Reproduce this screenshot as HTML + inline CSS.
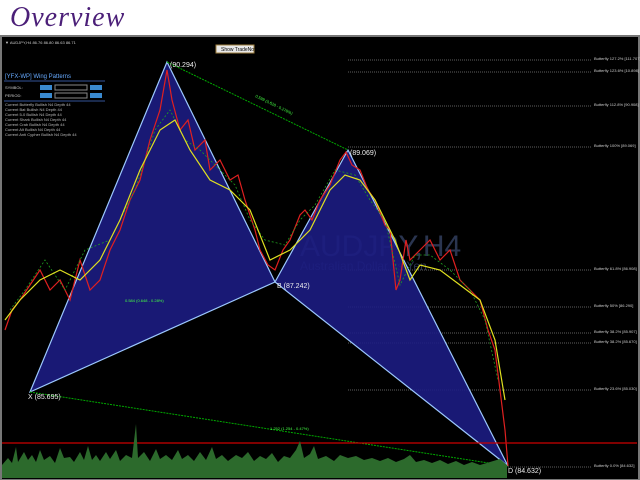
<html><head><style>body{margin:0;width:640px;height:480px;overflow:hidden;background:#fff}
.t{position:absolute;left:10px;top:2px;font:italic 28px "Liberation Serif",serif;color:#4b1f78;letter-spacing:1px}</style></head><body>
<div class="t">Overview</div>
<svg style="position:absolute;left:0;top:0" width="640" height="480" font-family="Liberation Sans,sans-serif">
<rect x="1" y="36" width="638" height="444" fill="#000" stroke="#777" stroke-width="2"/>
<text x="5" y="44" fill="#ccc" font-size="4">▼ AUDJPY,H4 86.76 86.80 86.63 86.71</text>
<rect x="216" y="45" width="38" height="8" fill="#e8e8e8" stroke="#a08040"/>
<text x="221" y="51" font-size="5" fill="#000">Show TradeNote</text>
<g stroke="#bbb" stroke-dasharray="1,1" stroke-width="0.6">
<line x1="348" y1="60" x2="592" y2="60"/><line x1="348" y1="72" x2="592" y2="72"/><line x1="348" y1="106" x2="592" y2="106"/><line x1="348" y1="147" x2="592" y2="147"/><line x1="348" y1="270" x2="592" y2="270"/><line x1="348" y1="307" x2="592" y2="307"/><line x1="348" y1="333" x2="592" y2="333"/><line x1="348" y1="343" x2="592" y2="343"/><line x1="348" y1="390" x2="592" y2="390"/><line x1="348" y1="467" x2="592" y2="467"/></g>
<g fill="#ccc" font-size="4"><text x="594" y="60">Butterfly 127.2% [111.707]</text><text x="594" y="72">Butterfly 123.6% [10.898]</text><text x="594" y="106">Butterfly 112.8% [90.908]</text><text x="594" y="147">Butterfly 100% [89.069]</text><text x="594" y="270">Butterfly 61.8% [86.908]</text><text x="594" y="307">Butterfly 50% [86.290]</text><text x="594" y="333">Butterfly 38.2% [85.907]</text><text x="594" y="343">Butterfly 38.2% [85.670]</text><text x="594" y="390">Butterfly 23.6% [85.030]</text><text x="594" y="467">Butterfly 0.0% [84.632]</text></g>
<text x="300" y="256" fill="#2a3550" font-size="30">AUDJPY,H4</text>
<text x="300" y="270" fill="#2a3550" font-size="12">Australian Dollar vs Yen</text>
<polygon points="30,392 167,62 275,282" fill="#1c1c82" fill-opacity="0.9" stroke="#9cc8ff" stroke-width="1.2"/>
<polygon points="275,282 348,150 508,466" fill="#1c1c82" fill-opacity="0.9" stroke="#9cc8ff" stroke-width="1.2"/>
<g stroke="#0a0" stroke-dasharray="2,1" stroke-width="1"><line x1="167" y1="62" x2="348" y2="150"/><line x1="30" y1="392" x2="508" y2="466"/></g>
<polyline points="5,330 12,310 20,300 30,285 40,270 50,290 60,280 70,300 80,260 90,290 100,280 110,250 120,230 130,200 140,180 150,140 160,110 167,70 172,100 180,130 188,120 195,150 205,140 210,170 220,160 230,180 238,175 245,200 255,230 260,250 268,265 275,270 283,250 290,240 300,215 305,210 312,220 320,200 330,185 340,160 346,152 352,165 360,170 368,190 375,200 385,225 390,230 396,290 400,280 406,240 410,260 420,250 430,240 440,260 450,250 460,280 470,290 480,300 488,330 495,350 500,390 505,430 508,466" fill="none" stroke="#e02020" stroke-width="1.2"/>
<polyline points="10,310 25,290 45,260 65,290 85,250 110,240 135,190 155,130 170,110 185,140 200,150 215,165 235,185 250,220 265,240 285,245 300,220 315,205 335,170 355,175 370,200 385,220 400,285 415,255 430,255 450,270 470,290 485,320 498,380" fill="none" stroke="#20a020" stroke-width="0.8" stroke-dasharray="2,2"/>
<polyline points="5,320 20,300 40,280 60,270 80,280 100,260 120,220 140,170 160,130 175,120 190,150 210,180 230,190 250,210 270,260 290,250 310,230 330,190 345,175 360,180 375,200 395,240 410,280 420,265 440,270 460,285 480,300 495,340 505,400" fill="none" stroke="#e0e020" stroke-width="1.2"/>
<line x1="2" y1="443" x2="637" y2="443" stroke="#c00" stroke-width="1.2"/>
<polygon fill="#2c6a2c" points="2,478 2,465 8,458 12,463 16,447 18,462 24,452 28,460 32,455 36,462 40,450 44,460 50,456 55,463 60,448 64,458 70,457 74,462 80,452 84,460 88,446 92,460 96,455 100,461 106,452 110,459 116,450 120,461 126,455 132,458 136,424 138,458 144,452 150,461 156,449 160,459 166,455 172,460 178,450 182,459 188,455 194,461 200,452 206,460 212,447 216,459 222,455 228,461 236,455 242,458 248,452 254,461 260,456 266,459 272,453 278,462 284,456 290,458 296,450 300,441 304,458 310,454 314,446 318,459 326,456 334,461 340,455 348,458 356,456 364,460 372,458 380,461 388,458 396,462 404,459 410,455 416,462 424,460 432,463 440,460 448,464 456,461 464,465 472,462 480,465 490,462 500,459 507,465 507,478"/>
<g fill="#eee" font-size="7"><text x="170" y="67">(90.294)</text><text x="350" y="155">(89.069)</text><text x="277" y="288">B (87.242)</text><text x="28" y="399">X (85.695)</text><text x="508" y="473">D (84.632)</text></g>
<g fill="#4f4" font-size="4"><text x="255" y="97" transform="rotate(26 255 97)">0.599 (0.628 - 0.278%)</text><text x="125" y="302">0.584 (0.648 - 0.28%)</text><text x="270" y="430">1.252 (1.254 - 0.47%)</text></g>
<g font-size="6" fill="#6af"><text x="5" y="78">[YFX-WP] Wing Patterns</text></g>
<line x1="4" y1="81" x2="105" y2="81" stroke="#359"/>
<g font-size="4" fill="#ccc"><text x="5" y="89">SYMBOL:</text><text x="5" y="97">PERIOD:</text></g>
<g fill="#3a8ad0"><rect x="40" y="85" width="12" height="5"/><rect x="90" y="85" width="12" height="5"/><rect x="40" y="93" width="12" height="5"/><rect x="90" y="93" width="12" height="5"/></g>
<g stroke="#888" fill="none"><rect x="55" y="85" width="32" height="5"/><rect x="55" y="93" width="32" height="5"/></g>
<line x1="4" y1="101" x2="105" y2="101" stroke="#359"/>
<g font-size="4" fill="#bbb"><text x="5" y="106">Current Butterfly Bullish N4 Depth 44</text><text x="5" y="111">Current Bat Bullish N4 Depth 44</text><text x="5" y="116">Current 5-0 Bullish N4 Depth 44</text><text x="5" y="121">Current Shark Bullish N4 Depth 44</text><text x="5" y="126">Current Crab Bullish N4 Depth 44</text><text x="5" y="131">Current Alt Bullish N4 Depth 44</text><text x="5" y="136">Current Anti Cypher Bullish N4 Depth 44</text></g>
</svg></body></html>
